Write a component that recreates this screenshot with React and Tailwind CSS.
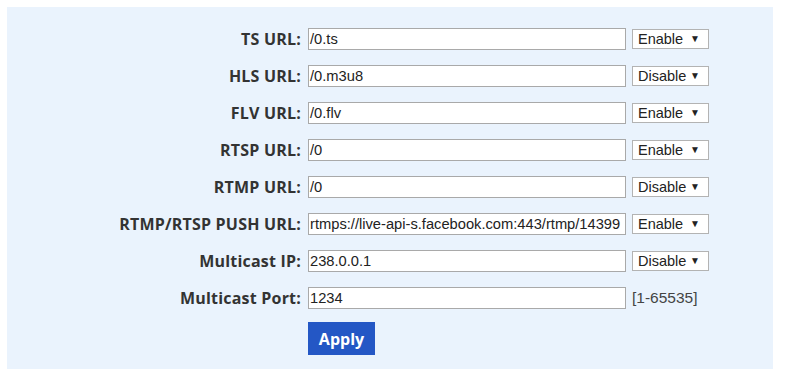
import React from "react";

const rows = [
  { label: "TS URL:", value: "/0.ts", select: "Enable" },
  { label: "HLS URL:", value: "/0.m3u8", select: "Disable" },
  { label: "FLV URL:", value: "/0.flv", select: "Enable" },
  { label: "RTSP URL:", value: "/0", select: "Enable" },
  { label: "RTMP URL:", value: "/0", select: "Disable" },
  {
    label: "RTMP/RTSP PUSH URL:",
    value: "rtmps://live-api-s.facebook.com:443/rtmp/14399",
    select: "Enable",
  },
  { label: "Multicast IP:", value: "238.0.0.1", select: "Disable" },
  { label: "Multicast Port:", value: "1234", hint: "[1-65535]" },
];

const SelectBox = ({ value }) => (
  <div className="flex h-[20px] w-[77px] items-center border border-[#b3b3b3] bg-white pl-[5px] text-[14.5px] leading-[18px] text-[#222]">
    <span className="flex-1">{value}</span>
    <span className="mr-[8px] text-[10px]">▼</span>
  </div>
);

export default function App() {
  return (
    <div className="min-h-[386px] bg-white p-[7px] font-['Liberation_Sans',Arial,sans-serif]">
      <div className="flex h-[362px] w-[766px] flex-col gap-[15px] bg-[#eaf3fd] pt-[21px]">
        {rows.map((row) => (
          <div key={row.label} className="flex h-[22px] items-center">
            <div className="w-[295px] pr-[1px] text-right font-['Open_Sans',sans-serif] text-[16px] font-bold tracking-[0.2px] text-[#333]">
              {row.label}
            </div>
            <div className="ml-[6px] flex h-[22px] w-[318px] items-center overflow-hidden border border-[#a9a9a9] bg-white pl-[1px] text-[14.7px] whitespace-nowrap text-[#222]">
              {row.value}
            </div>
            <div className="ml-[6px]">
              {row.select ? (
                <SelectBox value={row.select} />
              ) : (
                <span className="text-[15.5px] text-[#444]">{row.hint}</span>
              )}
            </div>
          </div>
        ))}
        <div className="ml-[301px] -mt-[2px]">
          <button className="h-[33px] w-[67px] bg-[#2457c5] font-['Open_Sans',sans-serif] text-[16px] font-bold text-white">
            Apply
          </button>
        </div>
      </div>
    </div>
  );
}
